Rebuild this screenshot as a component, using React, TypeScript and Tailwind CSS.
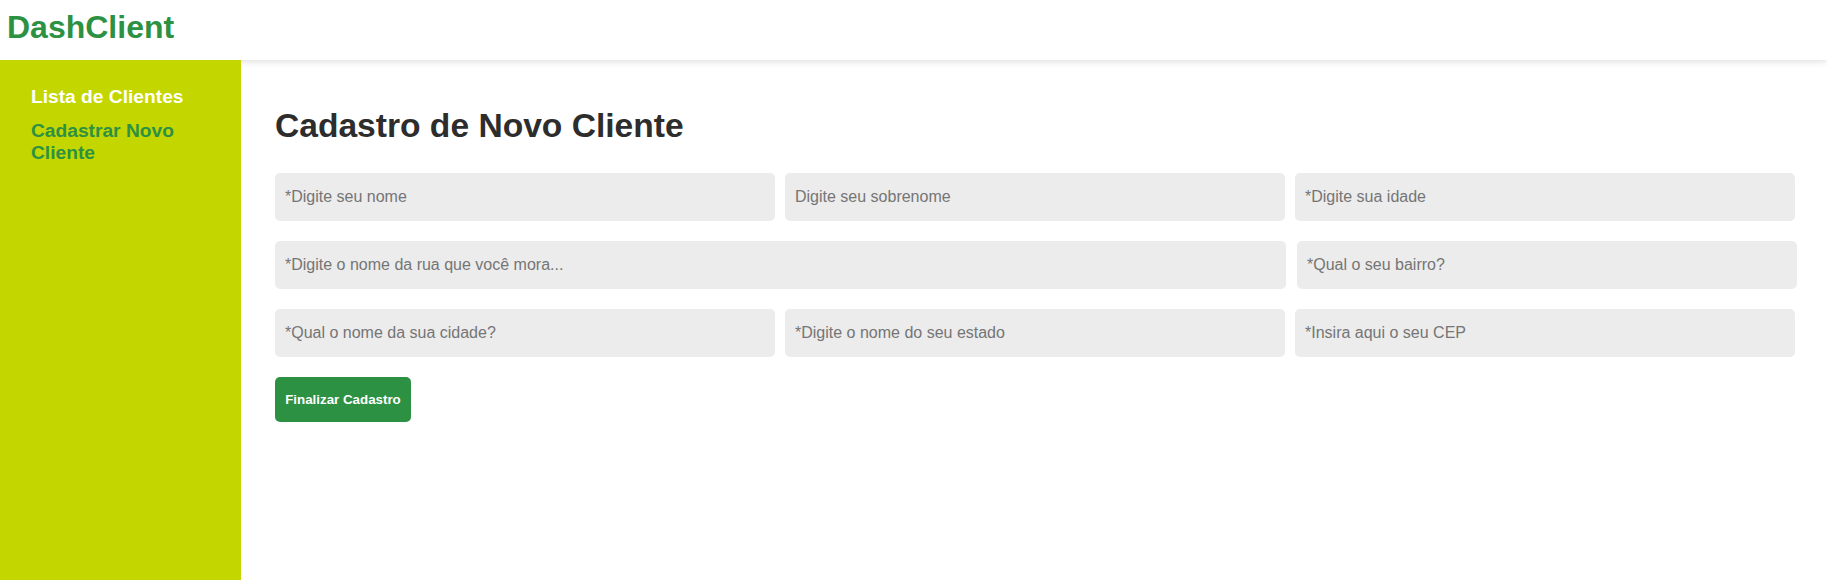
import React from "react";

const inputCls =
  "h-[48px] rounded-[5px] bg-[#ececec] px-[10px] text-[16px] text-[#333] placeholder:text-[#757575] outline-none border-0";

export default function App() {
  return (
    <div className="flex min-h-[580px] flex-col bg-white font-['Liberation_Sans',Arial,sans-serif]">
      <header className="flex h-[60px] shrink-0 items-start bg-white pl-[7px] pt-[9px] shadow-[0_2px_6px_rgba(0,0,0,0.12)]">
        <h1 className="text-[32px] font-bold leading-[normal] text-[#2c9142]">DashClient</h1>
      </header>
      <div className="flex flex-1">
        <aside className="w-[241px] shrink-0 bg-[#c4d600] pl-[31px] pr-[30px] pt-[26px]">
          <nav className="flex flex-col gap-[12px] text-[19.2px] font-bold leading-[normal]">
            <a className="text-white">Lista de Clientes</a>
            <a className="text-[#2c9142]">Cadastrar Novo Cliente</a>
          </nav>
        </aside>
        <main className="flex-1 pl-[34px] pt-[47px]">
          <h2 className="text-[33.6px] font-bold leading-[normal] text-[#2d2d2d]">
            Cadastro de Novo Cliente
          </h2>
          <form className="mt-[28px] flex flex-col gap-[20px]">
            <div className="flex gap-[10px]">
              <input className={`${inputCls} w-[500px]`} placeholder="*Digite seu nome" />
              <input className={`${inputCls} w-[500px]`} placeholder="Digite seu sobrenome" />
              <input className={`${inputCls} w-[500px]`} placeholder="*Digite sua idade" />
            </div>
            <div className="flex gap-[11px]">
              <input
                className={`${inputCls} w-[1011px]`}
                placeholder="*Digite o nome da rua que você mora..."
              />
              <input className={`${inputCls} w-[500px]`} placeholder="*Qual o seu bairro?" />
            </div>
            <div className="flex gap-[10px]">
              <input className={`${inputCls} w-[500px]`} placeholder="*Qual o nome da sua cidade?" />
              <input className={`${inputCls} w-[500px]`} placeholder="*Digite o nome do seu estado" />
              <input className={`${inputCls} w-[500px]`} placeholder="*Insira aqui o seu CEP" />
            </div>
            <div>
              <button
                type="button"
                className="h-[45px] w-[136px] rounded-[5px] bg-[#2c9142] text-[13.33px] font-bold text-white"
              >
                Finalizar Cadastro
              </button>
            </div>
          </form>
        </main>
      </div>
    </div>
  );
}
